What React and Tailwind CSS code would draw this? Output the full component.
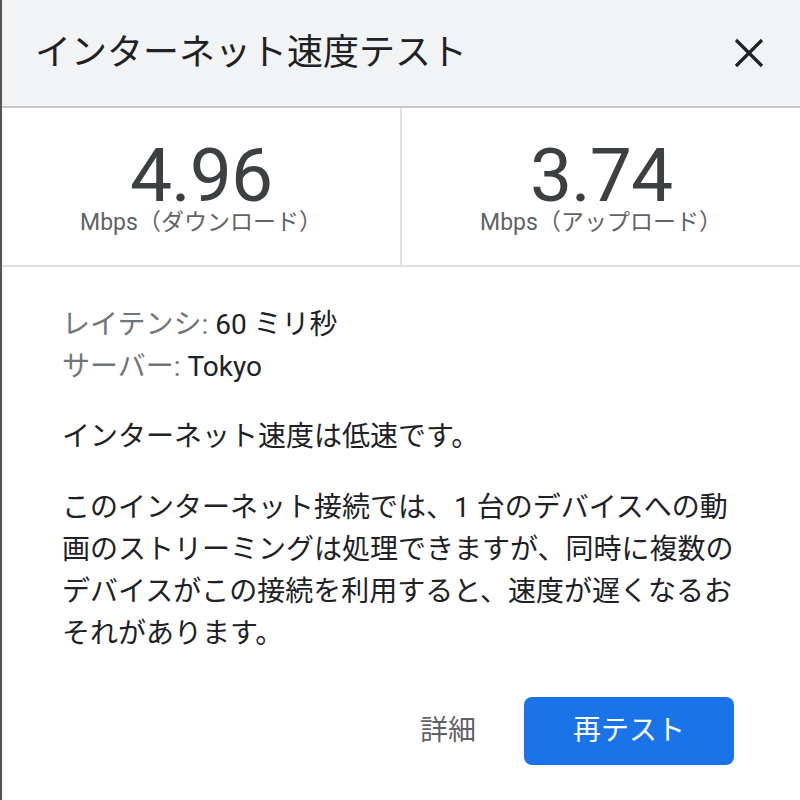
const JP = "font-['Roboto','Noto_Sans_CJK_JP',sans-serif]"

function Stat({ value, label }) {
  return (
    <div className="flex-1 flex flex-col items-center pt-[35px]">
      <div className="text-[75px] leading-[64px] text-[#3c4043] tracking-[-1px]">{value}</div>
      <div className="mt-[1px] text-[23px] leading-[30px] text-[#5f6368]">{label}</div>
    </div>
  )
}

export default function App() {
  return (
    <div className={`w-[800px] h-[800px] bg-white border-l-2 border-[#555] overflow-hidden ${JP}`}>
      {/* Header */}
      <div className="h-[108px] bg-[#f1f3f4] border-b-2 border-[#c6c6c6] flex items-center justify-between pl-[33px] pr-[36px]">
        <h1 className="text-[36px] leading-none text-[#202124] font-normal">インターネット速度テスト</h1>
        <button aria-label="閉じる" className="w-[30px] h-[30px] grid place-items-center">
          <svg width="30" height="30" viewBox="0 0 30 30">
            <path d="M2 2 L28 28 M28 2 L2 28" stroke="#202124" strokeWidth="3.2" />
          </svg>
        </button>
      </div>

      {/* Results */}
      <div className="h-[159px] flex border-b-2 border-[#e0e0e0]">
        <Stat value="4.96" label="Mbps（ダウンロード）" />
        <div className="w-[2px] bg-[#e0e0e0]" />
        <Stat value="3.74" label="Mbps（アップロード）" />
      </div>

      {/* Details */}
      <div className="pl-[60px] pt-[37px] text-[28px] leading-[42px] text-[#202124]">
        <div>
          <span className="text-[#70757a]">レイテンシ: </span>60 ミリ秒
        </div>
        <div>
          <span className="text-[#70757a]">サーバー: </span>Tokyo
        </div>
        <p className="mt-[28px]">インターネット速度は低速です。</p>
        <p className="mt-[29px] w-[690px]">
          このインターネット接続では、1 台のデバイスへの動画のストリーミングは処理できますが、同時に複数のデバイスがこの接続を利用すると、速度が遅くなるおそれがあります。
        </p>
      </div>

      {/* Actions */}
      <div className="mt-[42px] flex items-center justify-end gap-[48px] pr-[66px]">
        <button className="text-[28px] text-[#5f6368]">詳細</button>
        <button className="w-[210px] h-[68px] rounded-[8px] bg-[#1a73e8] text-white text-[28px]">再テスト</button>
      </div>
    </div>
  )
}
